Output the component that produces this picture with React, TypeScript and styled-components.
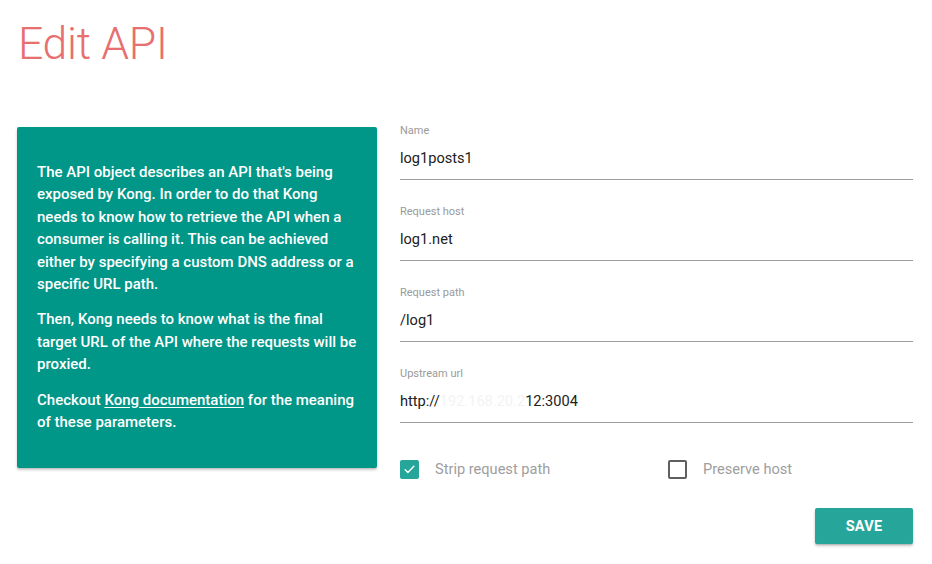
import React from "react";
import styled, { createGlobalStyle } from "styled-components";

const Global = createGlobalStyle`
  html, body { margin: 0; padding: 0; background: #ffffff; }
  body { font-family: Roboto, "Noto Sans", Arial, sans-serif; }
  * { box-sizing: border-box; }
`;

const Page = styled.div`
  width: 932px;
  height: 564px;
  padding: 14px 19px 0 17px;
  display: flex;
  flex-direction: column;
`;

const Title = styled.h1`
  margin: 0 0 0 1px;
  font-family: Roboto, sans-serif;
  font-weight: 300;
  font-size: 44.5px;
  line-height: 60px;
  color: #e86f6f;
  letter-spacing: -0.3px;
`;

const Columns = styled.div`
  margin-top: 53px;
  display: grid;
  grid-template-columns: 360px 1fr;
  column-gap: 23px;
  align-items: start;
`;

const InfoCard = styled.div`
  background: #009688;
  color: #ffffff;
  padding: 34px 20px 35px 20px;
  box-shadow: 0 2px 3px rgba(0, 0, 0, 0.2), 0 1px 1px rgba(0, 0, 0, 0.08);
  border-radius: 2px;
`;

const Para = styled.p`
  margin: 0 0 13px 0;
  font-family: Roboto, sans-serif;
  font-weight: 500;
  font-size: 15px;
  line-height: 22.4px;
  &:last-child { margin-bottom: 0; }
`;

const DocLink = styled.a`
  color: #ffffff;
  text-decoration: underline;
  text-underline-offset: 2px;
`;

const Form = styled.div`
  display: flex;
  flex-direction: column;
`;

const Field = styled.div`
  display: flex;
  flex-direction: column;
  height: 81px;
`;

const Label = styled.label`
  font-size: 11px;
  line-height: 14px;
  color: #9a9a9a;
  margin-top: -3px;
`;

const Value = styled.div`
  margin-top: 11px;
  font-size: 14.6px;
  line-height: 18px;
  color: #212121;
  padding-bottom: 12px;
  border-bottom: 1px solid #9e9e9e;
`;

const Faded = styled.span`
  color: #f3f3f3;
`;

const CheckRow = styled.div`
  display: flex;
  margin-top: 3px;
  height: 30px;
  align-items: center;
`;

const CheckItem = styled.div<{ $width?: number }>`
  display: flex;
  align-items: center;
  gap: 16px;
  width: ${(p) => (p.$width ? `${p.$width}px` : "auto")};
`;

const Box = styled.span<{ $checked?: boolean }>`
  width: 19px;
  height: 19px;
  border-radius: 2px;
  display: inline-flex;
  align-items: center;
  justify-content: center;
  background: ${(p) => (p.$checked ? "#26a69a" : "transparent")};
  border: ${(p) => (p.$checked ? "none" : "2px solid #5f5f5f")};
`;

const CheckLabel = styled.span`
  font-size: 14.6px;
  color: #9e9e9e;
`;

const Actions = styled.div`
  display: flex;
  justify-content: flex-end;
  margin-top: 24px;
`;

const SaveButton = styled.button`
  width: 98px;
  height: 36px;
  border: none;
  border-radius: 2px;
  background: #26a69a;
  color: #ffffff;
  font-family: Roboto, sans-serif;
  font-weight: 700;
  font-size: 14.5px;
  letter-spacing: 0.2px;
  box-shadow: 0 2px 3px rgba(0, 0, 0, 0.22), 0 1px 1px rgba(0, 0, 0, 0.1);
  cursor: pointer;
`;

const fields = [
  { label: "Name", value: "log1posts1" },
  { label: "Request host", value: "log1.net" },
  { label: "Request path", value: "/log1" },
];

export default function App() {
  return (
    <>
      <Global />
      <Page>
        <Title>Edit API</Title>
        <Columns>
          <InfoCard>
            <Para>
              The API object describes an API that's being exposed by Kong. In order to do
              that Kong needs to know how to retrieve the API when a consumer is calling it.
              This can be achieved either by specifying a custom DNS address or a specific URL
              path.
            </Para>
            <Para>
              Then, Kong needs to know what is the final target URL of the API where the
              requests will be proxied.
            </Para>
            <Para>
              Checkout <DocLink href="#">Kong documentation</DocLink> for the meaning of these
              parameters.
            </Para>
          </InfoCard>
          <Form>
            {fields.map((f) => (
              <Field key={f.label}>
                <Label>{f.label}</Label>
                <Value>{f.value}</Value>
              </Field>
            ))}
            <Field>
              <Label>Upstream url</Label>
              <Value>
                http://<Faded>192.168.20.2</Faded>12:3004
              </Value>
            </Field>
            <CheckRow>
              <CheckItem $width={268}>
                <Box $checked>
                  <svg width="13" height="13" viewBox="0 0 24 24" fill="none">
                    <path d="M4 12.5l5 5L20 6" stroke="#ffffff" strokeWidth="2.6" strokeLinecap="round" strokeLinejoin="round" />
                  </svg>
                </Box>
                <CheckLabel>Strip request path</CheckLabel>
              </CheckItem>
              <CheckItem>
                <Box />
                <CheckLabel>Preserve host</CheckLabel>
              </CheckItem>
            </CheckRow>
            <Actions>
              <SaveButton>SAVE</SaveButton>
            </Actions>
          </Form>
        </Columns>
      </Page>
    </>
  );
}
